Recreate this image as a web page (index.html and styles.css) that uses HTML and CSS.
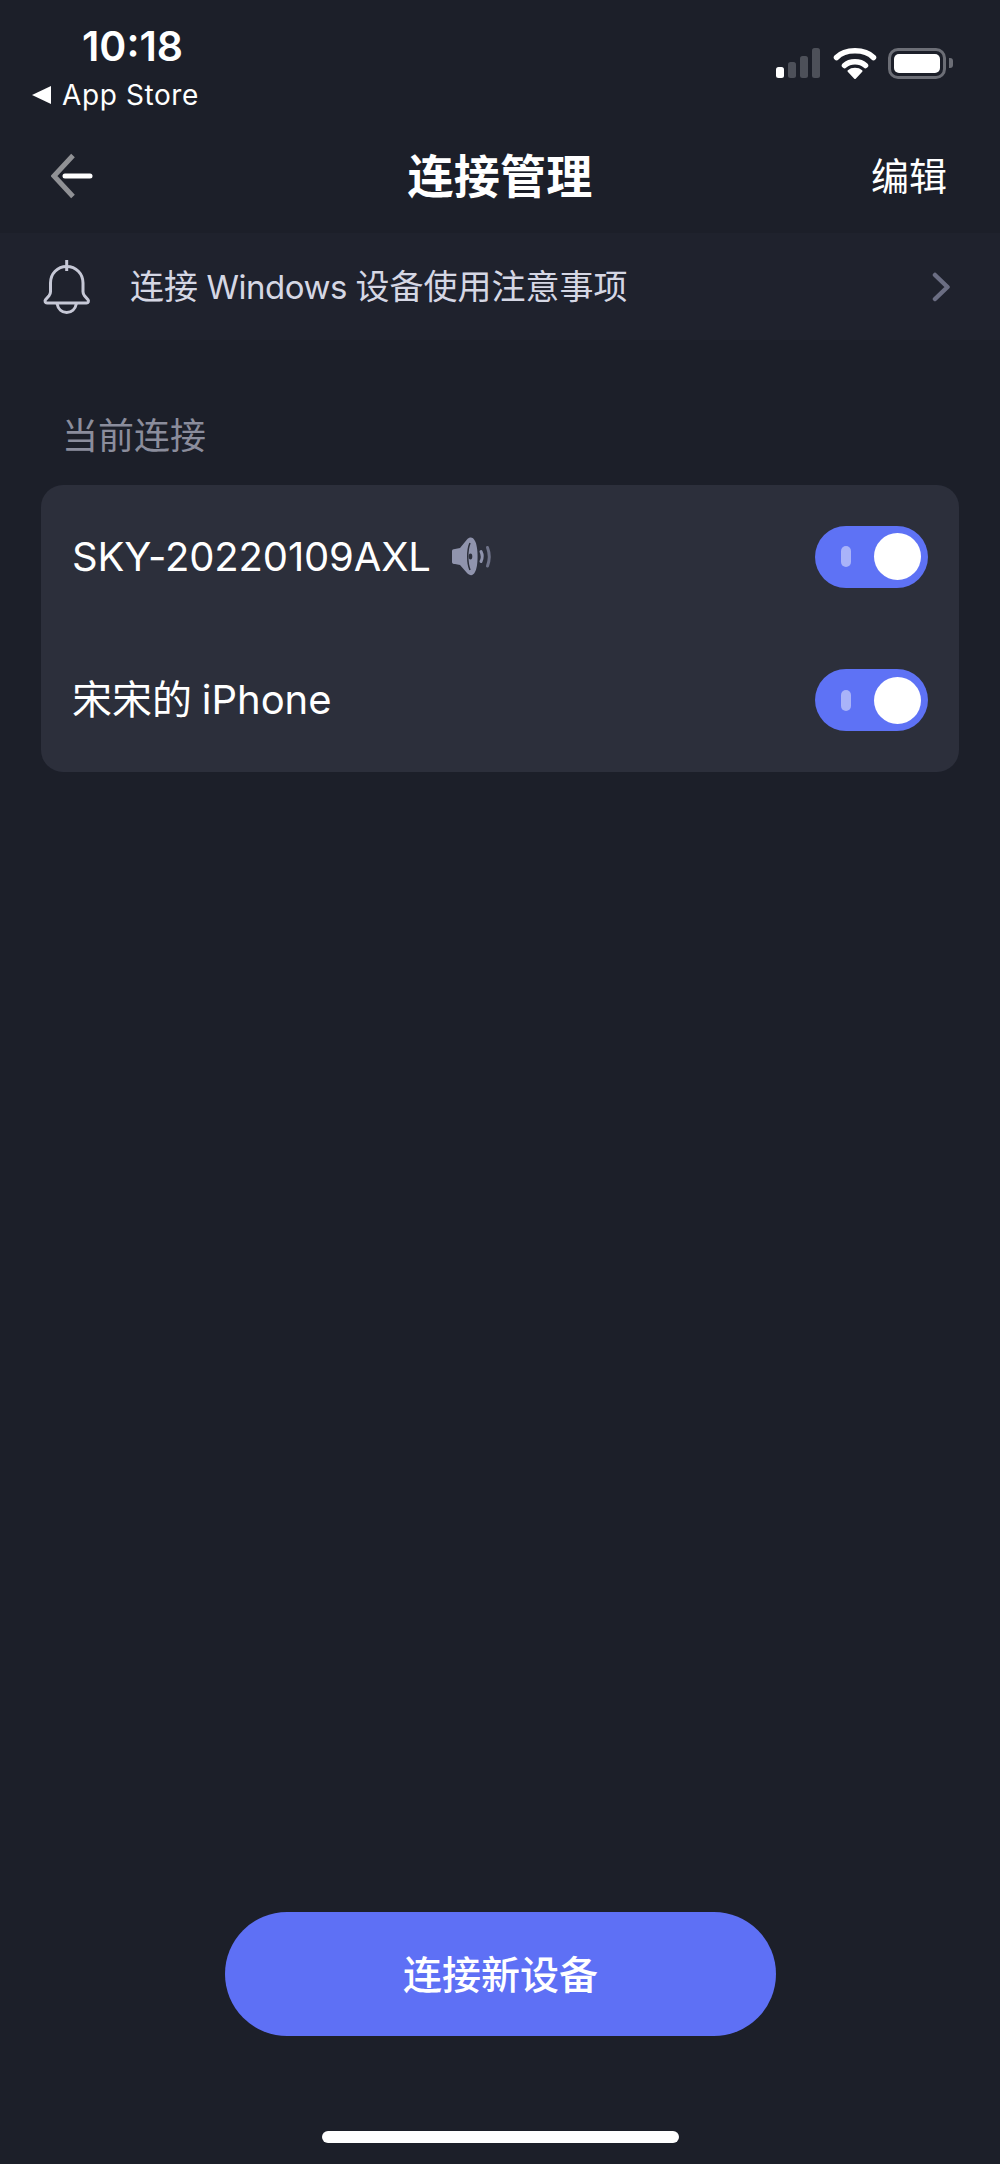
FILE: index.html
```html
<!DOCTYPE html>
<html lang="zh-CN">
<head>
<meta charset="utf-8">
<title>连接管理</title>
<link rel="stylesheet" href="styles.css">
</head>
<body>
<div class="page">
  <header class="status">
    <div class="status-left">
      <div class="time">10:18</div>
      <div class="crumb"><span class="crumb-arrow"></span><span>App Store</span></div>
    </div>
    <div class="status-right">
      <svg class="signal" width="44" height="30" viewBox="0 0 44 30" aria-hidden="true">
        <rect class="sig-on" x="0" y="19" width="8" height="11" rx="2.5"/>
        <rect class="sig-off" x="12" y="14" width="8" height="16" rx="2.5"/>
        <rect class="sig-off" x="24" y="8" width="8" height="22" rx="2.5"/>
        <rect class="sig-off" x="36" y="0" width="8" height="30" rx="2.5"/>
      </svg>
      <svg class="wifi" width="46" height="38" viewBox="0 0 46 38" aria-hidden="true">
        <path class="wifi-arc" d="M4.5 13.5C13 4.5 33 4.5 41.5 13.5"/>
        <path class="wifi-arc" d="M12.5 21.5C18 16.5 28 16.5 33.5 21.5"/>
        <path class="wifi-dot" d="M16.5 27C20 24 26 24 29.5 27L23 34Z"/>
      </svg>
      <div class="battery"><div class="battery-level"></div></div>
      <div class="battery-tip"></div>
    </div>
  </header>

  <nav class="nav">
    <svg class="back" width="44" height="48" viewBox="0 0 44 48" aria-hidden="true">
      <path class="back-chev" d="M22 3.500L3 24L22 44.500"/>
      <path class="back-line" d="M14 24H39"/>
    </svg>
    <h1 class="title">连接管理</h1>
    <span class="edit">编辑</span>
  </nav>

  <section class="notice">
    <svg class="bell" width="50" height="58" viewBox="0 0 50 58" aria-hidden="true">
      <path d="M5 45H44.500C46.300 45 47 43 46 41.700L42.500 37.700C41.500 36.500 41 35.200 41 33.700V25C41 15.500 34 8.500 24.700 8.500S8.500 15.500 8.500 25V33.700C8.500 35.200 8 36.500 7 37.700L3.500 41.700C2.500 43 3.200 45 5 45Z"/>
      <path d="M15 45.500C16 51 20 54.500 24.700 54.500S33.400 51 34.400 45.500"/>
      <path d="M24.700 2V13"/>
    </svg>
    <span class="notice-text">连接 <span class="notice-latin">Windows</span> 设备使用注意事项</span>
    <svg class="chevron" width="20" height="30" viewBox="0 0 20 30" aria-hidden="true">
      <path d="M3 3L15.500 15L3 27"/>
    </svg>
  </section>

  <div class="section-label">当前连接</div>

  <section class="card">
    <div class="row">
      <div class="device">
        <span class="device-latin">SKY-20220109AXL</span>
        <svg class="speaker" width="46" height="44" viewBox="0 0 46 44" aria-hidden="true">
          <path class="spk-body" d="M3 16Q3 14 6 14L11 13L18 4.500C21 1.500 24 2 26 6C29.500 12 29.500 32 26 37C24 41 21 41 18 38L11 30L6 29Q3 29 3 27Z"/>
          <path class="spk-ear" d="M21 8C18 15 18 28 21 35"/>
          <ellipse class="spk-dot" cx="21.500" cy="21.500" rx="1.800" ry="3"/>
          <path class="spk-wave" d="M32 16.500Q34.500 21.500 32 26.500"/>
          <path class="spk-wave dim" d="M38.500 12.500Q42 21.500 38.500 31"/>
        </svg>
      </div>
      <div class="toggle"><span class="toggle-mark"></span><span class="toggle-knob"></span></div>
    </div>
    <div class="row">
      <div class="device"><span class="device-mixed">宋宋的 iPhone</span></div>
      <div class="toggle"><span class="toggle-mark"></span><span class="toggle-knob"></span></div>
    </div>
  </section>

  <button class="cta" type="button">连接新设备</button>
  <div class="home-bar"></div>
</div>
</body>
</html>
```

FILE: styles.css
```css
* { box-sizing: border-box; }

html, body { margin: 0; padding: 0; background: #1c1f29; }

body {
  font-family: "Inter", "Noto Sans CJK SC", sans-serif;
  color: #fff;
}

.page {
  width: 1000px;
  height: 2164px;
  display: flex;
  flex-direction: column;
  background: #1c1f29;
}

/* status bar */
.status {
  height: 118px;
  display: flex;
  justify-content: space-between;
  padding: 0 47px 0 32px;
}

.status-left { display: flex; flex-direction: column; }

.time {
  margin: 23px 0 0 50px;
  height: 46px;
  font-size: 41px;
  line-height: 46px;
  font-weight: 600;
}

.crumb {
  display: flex;
  align-items: center;
  gap: 11px;
  margin-top: 11px;
  height: 30px;
  font-size: 28px;
  line-height: 30px;
  font-weight: 400;
  letter-spacing: 0.6px;
}

.crumb-arrow {
  width: 0;
  height: 0;
  border-style: solid;
  border-width: 9px 19px 9px 0;
  border-color: transparent #fff transparent transparent;
}

.status-right {
  display: flex;
  align-items: flex-start;
  padding-top: 47px;
}

.signal { margin-top: 1px; margin-right: 12px; }
.sig-on { fill: #fff; }
.sig-off { fill: #4d5059; }

.wifi { margin-top: -3px; margin-right: 10px; }
.wifi-arc { fill: none; stroke: #fff; stroke-width: 5.500; stroke-linecap: round; }
.wifi-dot { fill: #fff; stroke: #fff; stroke-width: 2; stroke-linejoin: round; }

.battery {
  width: 58px;
  height: 31px;
  padding: 3px;
  margin-top: 1px;
  border: 3px solid #6c6e76;
  border-radius: 10px;
}

.battery-level {
  width: 100%;
  height: 100%;
  background: #fff;
  border-radius: 5px;
}

.battery-tip {
  width: 4px;
  height: 10px;
  margin: 11px 0 0 3px;
  background: #6c6e76;
  border-radius: 0 3px 3px 0;
}

/* navigation */
.nav {
  height: 115px;
  display: flex;
  align-items: center;
  justify-content: space-between;
  padding: 0 53px 0 51px;
  position: relative;
}

.back-chev { fill: none; stroke: #909195; stroke-width: 5; }
.back-line { fill: none; stroke: #fff; stroke-width: 5; stroke-linecap: round; }

.title {
  margin: 0;
  position: absolute;
  left: 0;
  right: 0;
  text-align: center;
  font-size: 46px;
  line-height: 60px;
  font-weight: 700;
  letter-spacing: 0.2px;
}

.edit { font-size: 38px; line-height: 50px; font-weight: 400; }

/* notice */
.notice {
  height: 107px;
  display: flex;
  align-items: center;
  padding: 0 48px 0 42px;
  background: #1f222d;
}

.bell { flex: none; margin-right: 38px; }
.bell path { fill: none; stroke: #c6c8d6; stroke-width: 3; stroke-linejoin: round; }

.notice-text {
  flex: 1;
  font-size: 34px;
  line-height: 44px;
  color: #d5d7e4;
  word-spacing: -1px;
}

.notice-latin { font-size: 33px; letter-spacing: -0.5px; }

.chevron path { fill: none; stroke: #6b6e83; stroke-width: 4.500; stroke-linecap: round; stroke-linejoin: round; }

/* section */
.section-label {
  margin: 71px 0 0 62px;
  height: 50px;
  font-size: 36px;
  line-height: 50px;
  color: #8b8d9c;
}

.card {
  margin: 24px 41px 0;
  height: 287px;
  display: flex;
  flex-direction: column;
  background: #2c2f3b;
  border-radius: 22px;
}

.row {
  flex: 1;
  display: flex;
  align-items: center;
  justify-content: space-between;
  padding: 0 31px 0 31px;
}

.device {
  display: flex;
  align-items: center;
  gap: 18px;
  font-size: 40px;
  line-height: 56px;
}

.device-latin { letter-spacing: -0.15px; }
.device-mixed { word-spacing: -1.500px; }

.spk-body { fill: #9094ad; }
.spk-ear { fill: none; stroke: #2c2f3b; stroke-width: 1.500; }
.spk-dot { fill: #2c2f3b; }
.spk-wave { fill: none; stroke: #9094ad; stroke-width: 3; stroke-linecap: round; }
.spk-wave.dim { stroke: #6f7389; }

.toggle {
  width: 113px;
  height: 62px;
  display: flex;
  align-items: center;
  justify-content: space-between;
  padding: 0 7px 0 26px;
  background: #5e72f5;
  border-radius: 31px;
}

.toggle-mark {
  width: 10px;
  height: 21px;
  background: #a9b3f9;
  border-radius: 5px;
}

.toggle-knob {
  width: 47px;
  height: 47px;
  background: #fff;
  border-radius: 50%;
}

/* bottom */
.cta {
  margin: auto 224px 0 225px;
  height: 124px;
  padding: 0 0 4px;
  border: 0;
  border-radius: 62px;
  background: #5e70f5;
  color: #fff;
  font-family: inherit;
  font-size: 39px;
  font-weight: 500;
}

.home-bar {
  margin: 95px 321px 21px 322px;
  height: 12px;
  background: #fff;
  border-radius: 6px;
}
```
